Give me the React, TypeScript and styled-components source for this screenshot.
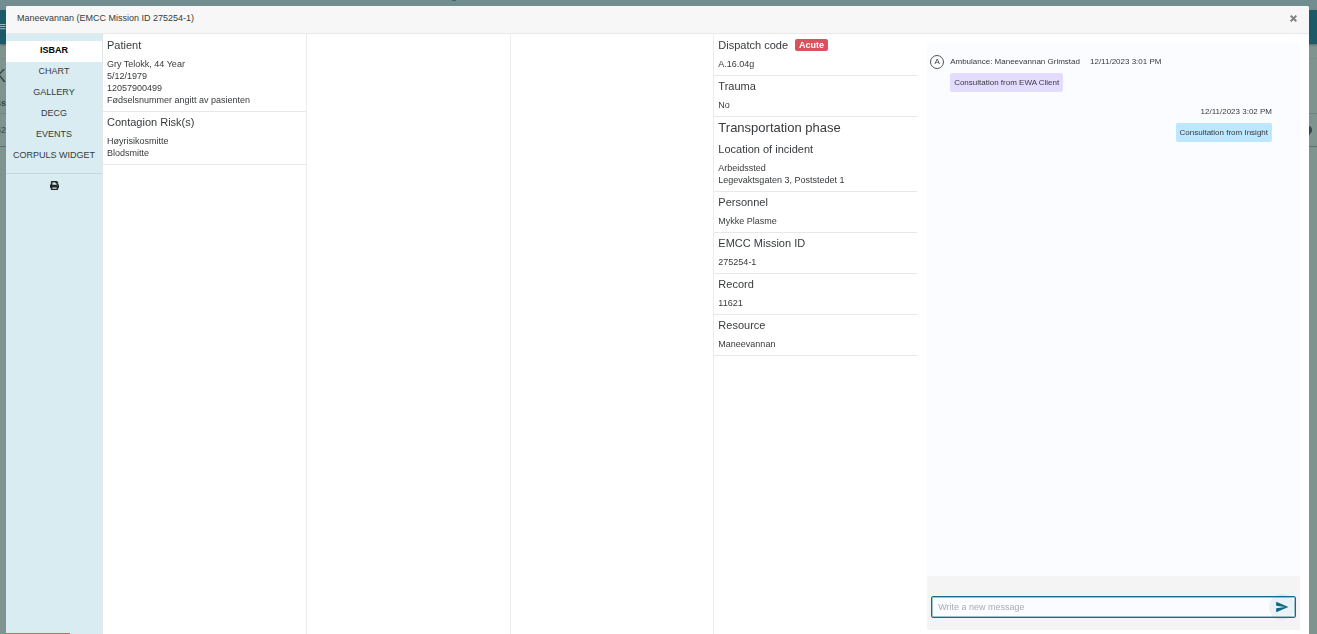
import React, { useState } from "react";
import styled, { createGlobalStyle } from "styled-components";
import { FaPrint, FaTimes } from "react-icons/fa";
import { MdSend } from "react-icons/md";

const GlobalStyle = createGlobalStyle`
  *, *::before, *::after { box-sizing: border-box; }
  html, body, #root { height: 100%; }
  body {
    margin: 0;
    overflow: hidden;
    background: #7f938f;
    color: #373a3c;
    font-family: "Liberation Sans", Arial, sans-serif;
    font-size: 9px;
    line-height: 12px;
  }
  h1, h2, h3, p { margin: 0; padding: 0; font-weight: 400; }
  button, input { font: inherit; color: inherit; }
`;

const Backdrop = styled.div`
  position: fixed;
  inset: 0;
  display: flex;
  flex-direction: column;
  overflow: hidden;
`;

const BackTop = styled.div`
  height: 10px;
  flex: none;
  display: flex;
  justify-content: flex-start;
  padding-left: 34%;
  background: #738e90;
`;

const BackMark = styled.span`
  width: 4px;
  height: 1px;
  margin-left: 4px;
  background: #2f6f78;
`;

const BackNav = styled.div`
  height: 34px;
  flex: none;
  display: flex;
  align-items: center;
  background: #1c5a68;
  color: #9db4b8;
  box-shadow: 0 1px 2px #4f6a6c;
`;

const BackRow = styled.div<{ $height: number; $line?: string }>`
  height: ${(p) => p.$height}px;
  flex: none;
  display: flex;
  align-items: center;
  justify-content: space-between;
  border-bottom: 1px solid ${(p) => p.$line ?? "transparent"};
  color: #3a4849;
`;

const BackEdge = styled.span<{ $size?: number; $bold?: boolean }>`
  width: 6px;
  display: flex;
  justify-content: flex-end;
  font-size: ${(p) => p.$size ?? 9}px;
  font-weight: ${(p) => (p.$bold ? 700 : 400)};
`;

const BackIcon = styled.svg`
  width: 10px;
  height: 10px;
  margin-right: 5px;
  fill: #34494c;
`;

const Modal = styled.main`
  position: fixed;
  inset: 6px 8px 0 6px;
  display: flex;
  flex-direction: column;
  overflow: hidden;
  border-radius: 2px 2px 0 0;
  background: #fff;
`;

const ModalHeader = styled.header`
  height: 28px;
  flex: none;
  display: flex;
  align-items: center;
  justify-content: space-between;
  padding: 0 11px 3px;
  background: #f7f7f7;
  border-bottom: 1px solid #e7e8e9;
`;

const ModalTitle = styled.h1`
  font-size: 9px;
  line-height: 12px;
`;

const CloseButton = styled.button`
  display: flex;
  padding: 0;
  border: 0;
  background: none;
  color: #808080;
  font-size: 9px;

  svg { stroke: currentColor; stroke-width: 30; }
`;

const ModalBody = styled.div`
  flex: 1;
  min-height: 0;
  display: flex;
`;

const Sidebar = styled.nav`
  width: 97px;
  flex: none;
  display: flex;
  flex-direction: column;
  padding-top: 7px;
  background: #d8ecf1;
  border-right: 1px solid #dfe6e8;
`;

const NavList = styled.div`
  padding-bottom: 6px;
  border-bottom: 1px solid #c2d9df;
`;

const NavItem = styled.a<{ $active?: boolean }>`
  display: block;
  height: 21px;
  line-height: 19px;
  text-align: center;
  text-decoration: none;
  white-space: nowrap;
  color: ${(p) => (p.$active ? "#000" : "#373a3c")};
  background: ${(p) => (p.$active ? "#fff" : "transparent")};
  font-weight: ${(p) => (p.$active ? 700 : 400)};
`;

const PrintButton = styled.button`
  display: flex;
  justify-content: center;
  width: 100%;
  padding: 7px 0;
  border: 0;
  background: none;
  color: #212529;
  font-size: 9px;

  svg { stroke: currentColor; stroke-width: 24; }
`;

const AlertLine = styled.div`
  width: 64px;
  height: 1px;
  margin-top: auto;
  background: #d4606c;
`;

const Column = styled.div`
  flex: 1;
  min-width: 0;
  padding-top: 1px;
  border-right: 1px solid #ebecee;

  &:nth-last-child(2) { border-right-color: transparent; }
`;

const Section = styled.section`
  padding: 3px 4px 5px;
  border-bottom: 1px solid #e6e8eb;
`;

const PhaseTitle = styled.h2`
  margin-bottom: 6px;
  font-size: 13px;
  line-height: 16px;
`;

const SectionTitle = styled.h3`
  display: flex;
  align-items: center;
  gap: 7px;
  margin-bottom: 6px;
  font-size: 11px;
  line-height: 14px;
`;

const Badge = styled.span`
  padding: 0 4px;
  border-radius: 2px;
  background: #d9535f;
  color: #fff;
  font-size: 9px;
  line-height: 12px;
  font-weight: 700;
`;

const Chat = styled.aside`
  flex: 0 0 30%;
  display: flex;
  flex-direction: column;
  padding: 8px 9px 4px;
`;

const Messages = styled.div`
  flex: 1;
  display: flex;
  flex-direction: column;
  gap: 13px;
  padding: 13px 28px 0 3px;
  background: #fbfcff;
  font-size: 8px;
`;

const Message = styled.article<{ $own?: boolean }>`
  display: flex;
  align-items: flex-start;
  justify-content: ${(p) => (p.$own ? "flex-end" : "flex-start")};
  gap: 6px;
`;

const Avatar = styled.span`
  width: 14px;
  height: 14px;
  border: 1px solid #555;
  border-radius: 50%;
  text-align: center;
  line-height: 12px;
`;

const MessageContent = styled.div<{ $own?: boolean }>`
  display: flex;
  flex-direction: column;
  align-items: ${(p) => (p.$own ? "flex-end" : "flex-start")};
  gap: 4px;
`;

const Meta = styled.div`
  display: flex;
  gap: 10px;
  line-height: 14px;
`;

const Bubble = styled.p<{ $own?: boolean }>`
  padding: 3px 4px;
  border-radius: 2px;
  background: ${(p) => (p.$own ? "#bde6ff" : "#e4dcff")};
  line-height: 13px;
`;

const Composer = styled.form`
  flex: none;
  padding: 20px 4px 12px;
  background: #f4f4f4;
`;

const InputBox = styled.div`
  height: 22px;
  display: flex;
  align-items: center;
  border: 1px solid #156d8a;
  border-radius: 2px;
  background: #fbfcff;
  box-shadow: inset 0 0 0 1px #9cc3d0;
`;

const MessageInput = styled.input`
  flex: 1;
  min-width: 0;
  padding: 0 6px;
  border: 0;
  outline: 0;
  background: none;

  &::placeholder { color: #a9adb0; opacity: 1; }
`;

const SendButton = styled.button`
  width: 26px;
  height: 26px;
  flex: none;
  display: flex;
  align-items: center;
  justify-content: center;
  padding: 0;
  border: 0;
  border-radius: 50%;
  background: rgba(13, 104, 135, 0.07);
  color: #0d6887;
  font-size: 14px;
`;

const navItems = ["ISBAR", "CHART", "GALLERY", "DECG", "EVENTS", "CORPULS WIDGET"];

type Info = { title: string; lines: string[]; badge?: string; phase?: string };

const patientInfo: Info[] = [
  { title: "Patient", lines: ["Gry Telokk, 44 Year", "5/12/1979", "12057900499", "Fødselsnummer angitt av pasienten"] },
  { title: "Contagion Risk(s)", lines: ["Høyrisikosmitte", "Blodsmitte"] },
];

const missionInfo: Info[] = [
  { title: "Dispatch code", badge: "Acute", lines: ["A.16.04g"] },
  { title: "Trauma", lines: ["No"] },
  { phase: "Transportation phase", title: "Location of incident", lines: ["Arbeidssted", "Legevaktsgaten 3, Poststedet 1"] },
  { title: "Personnel", lines: ["Mykke Plasme"] },
  { title: "EMCC Mission ID", lines: ["275254-1"] },
  { title: "Record", lines: ["11621"] },
  { title: "Resource", lines: ["Maneevannan"] },
];

const InfoColumn = ({ items = [] }: { items?: Info[] }) => (
  <Column>
    {items.map((item) => (
      <Section key={item.title}>
        {item.phase && <PhaseTitle>{item.phase}</PhaseTitle>}
        <SectionTitle>
          {item.title}
          {item.badge && <Badge>{item.badge}</Badge>}
        </SectionTitle>
        {item.lines.map((line) => (
          <p key={line}>{line}</p>
        ))}
      </Section>
    ))}
  </Column>
);

export default function App() {
  const [draft, setDraft] = useState("");
  return (
    <>
      <GlobalStyle />
      <Backdrop aria-hidden="true">
        <BackTop>
          <BackMark />
        </BackTop>
        <BackNav>
          <BackEdge $size={13}>≡</BackEdge>
        </BackNav>
        <BackRow $height={15} $line="#788d8a" />
        <BackRow $height={34}>
          <BackEdge $size={18}>K</BackEdge>
        </BackRow>
        <BackRow $height={21} $line="#6f8582">
          <BackEdge $bold>ss</BackEdge>
        </BackRow>
        <BackRow $height={33} $line="#5b706f">
          <BackEdge>52</BackEdge>
          <BackIcon viewBox="0 0 10 10">
            <circle cx="6" cy="5" r="4" />
            <rect x="6" y="8" width="2" height="2" />
          </BackIcon>
        </BackRow>
      </Backdrop>
      <Modal role="dialog" aria-labelledby="mission-title">
        <ModalHeader>
          <ModalTitle id="mission-title">Maneevannan (EMCC Mission ID 275254-1)</ModalTitle>
          <CloseButton type="button" aria-label="Close">
            <FaTimes />
          </CloseButton>
        </ModalHeader>
        <ModalBody>
          <Sidebar>
            <NavList>
              {navItems.map((item, i) => (
                <NavItem key={item} href="#" $active={i === 0}>
                  {item}
                </NavItem>
              ))}
            </NavList>
            <PrintButton type="button" aria-label="Print">
              <FaPrint />
            </PrintButton>
            <AlertLine />
          </Sidebar>
          <InfoColumn items={patientInfo} />
          <InfoColumn />
          <InfoColumn />
          <InfoColumn items={missionInfo} />
          <Chat>
            <Messages>
              <Message>
                <Avatar>A</Avatar>
                <MessageContent>
                  <Meta>
                    <span>Ambulance: Maneevannan Grimstad</span>
                    <time>12/11/2023 3:01 PM</time>
                  </Meta>
                  <Bubble>Consultation from EWA Client</Bubble>
                </MessageContent>
              </Message>
              <Message $own>
                <MessageContent $own>
                  <Meta>
                    <time>12/11/2023 3:02 PM</time>
                  </Meta>
                  <Bubble $own>Consultation from Insight</Bubble>
                </MessageContent>
              </Message>
            </Messages>
            <Composer onSubmit={(e) => e.preventDefault()}>
              <InputBox>
                <MessageInput
                  aria-label="Write a new message"
                  placeholder="Write a new message"
                  value={draft}
                  onChange={(e) => setDraft(e.target.value)}
                />
                <SendButton type="submit" aria-label="Send">
                  <MdSend />
                </SendButton>
              </InputBox>
            </Composer>
          </Chat>
        </ModalBody>
      </Modal>
    </>
  );
}
